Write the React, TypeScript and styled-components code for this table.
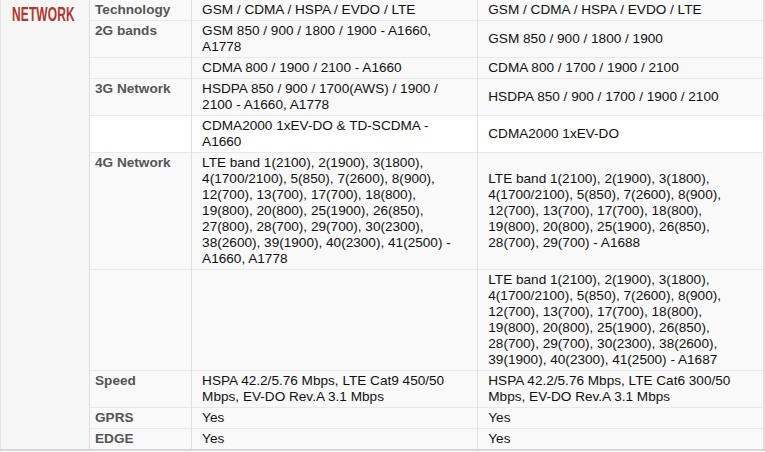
import styled, { createGlobalStyle } from 'styled-components';

const GlobalStyle = createGlobalStyle`
  body {
    margin: 0;
    background: #ffffff;
    font-family: "Liberation Sans", Arial, sans-serif;
  }
`;

const SpecTable = styled.table`
  width: 765px;
  table-layout: fixed;
  border-collapse: collapse;
  border-right: 2px solid #dcdcdc;
  border-bottom: 2px solid #d6d6d6;
  font-size: 13.6px;
  line-height: 16px;
`;

const Column = styled.col<{ $width: number }>`
  width: ${(p) => p.$width}px;
`;

const GroupCell = styled.th`
  background: #f6f6f6;
  border-left: 1px solid #e2e2e2;
  border-right: 1px solid #dedede;
  vertical-align: top;
  text-align: left;
  padding: 4px 0 0 11px;
`;

const GroupTitle = styled.span`
  display: inline-block;
  color: #b3352c;
  font-size: 20px;
  line-height: 20px;
  font-weight: 700;
  letter-spacing: 0.2px;
  transform: scaleX(0.6);
  transform-origin: left top;
`;

const Row = styled.tr<{ $plain?: boolean }>`
  background: ${(p) => (p.$plain ? '#ffffff' : '#f9f9f9')};
  border-top: 1px solid #e9e9e9;

  &:first-child {
    border-top: none;
  }
`;

const Label = styled.td`
  color: #555555;
  font-weight: 700;
  vertical-align: top;
  padding: 2px 4px 2px 5px;
  border-right: 1px solid #e0e0e0;
`;

const Value = styled.td`
  color: #111111;
  vertical-align: middle;
  padding: 2px 10px 2px 10px;
  border-right: 1px solid #e0e0e0;
`;

type Spec = {
  label: string;
  left: string;
  right: string;
  plain?: boolean;
};

const columns = [89, 102, 286, 286];

const specs: Spec[] = [
  {
    label: 'Technology',
    left: 'GSM / CDMA / HSPA / EVDO / LTE',
    right: 'GSM / CDMA / HSPA / EVDO / LTE',
  },
  {
    label: '2G bands',
    left: 'GSM 850 / 900 / 1800 / 1900 - A1660, A1778',
    right: 'GSM 850 / 900 / 1800 / 1900',
  },
  {
    label: '',
    left: 'CDMA 800 / 1900 / 2100 - A1660',
    right: 'CDMA 800 / 1700 / 1900 / 2100',
  },
  {
    label: '3G Network',
    left: 'HSDPA 850 / 900 / 1700(AWS) / 1900 / 2100 - A1660, A1778',
    right: 'HSDPA 850 / 900 / 1700 / 1900 / 2100',
  },
  {
    label: '',
    left: 'CDMA2000 1xEV-DO & TD-SCDMA - A1660',
    right: 'CDMA2000 1xEV-DO',
    plain: true,
  },
  {
    label: '4G Network',
    left:
      'LTE band 1(2100), 2(1900), 3(1800), 4(1700/2100), 5(850), 7(2600), 8(900), 12(700), 13(700), 17(700), 18(800), 19(800), 20(800), 25(1900), 26(850), 27(800), 28(700), 29(700), 30(2300), 38(2600), 39(1900), 40(2300), 41(2500) - A1660, A1778',
    right:
      'LTE band 1(2100), 2(1900), 3(1800), 4(1700/2100), 5(850), 7(2600), 8(900), 12(700), 13(700), 17(700), 18(800), 19(800), 20(800), 25(1900), 26(850), 28(700), 29(700) - A1688',
  },
  {
    label: '',
    left: '',
    right:
      'LTE band 1(2100), 2(1900), 3(1800), 4(1700/2100), 5(850), 7(2600), 8(900), 12(700), 13(700), 17(700), 18(800), 19(800), 20(800), 25(1900), 26(850), 28(700), 29(700), 30(2300), 38(2600), 39(1900), 40(2300), 41(2500) - A1687',
  },
  {
    label: 'Speed',
    left: 'HSPA 42.2/5.76 Mbps, LTE Cat9 450/50 Mbps, EV-DO Rev.A 3.1 Mbps',
    right: 'HSPA 42.2/5.76 Mbps, LTE Cat6 300/50 Mbps, EV-DO Rev.A 3.1 Mbps',
  },
  { label: 'GPRS', left: 'Yes', right: 'Yes' },
  { label: 'EDGE', left: 'Yes', right: 'Yes' },
];

function App() {
  return (
    <>
      <GlobalStyle />
      <SpecTable>
        <colgroup>
          {columns.map((w, i) => (
            <Column key={i} $width={w} />
          ))}
        </colgroup>
        <tbody>
          {specs.map((spec, i) => (
            <Row key={i} $plain={spec.plain}>
              {i === 0 ? (
                <GroupCell rowSpan={specs.length}>
                  <GroupTitle>NETWORK</GroupTitle>
                </GroupCell>
              ) : null}
              <Label>{spec.label}</Label>
              <Value>{spec.left}</Value>
              <Value>{spec.right}</Value>
            </Row>
          ))}
        </tbody>
      </SpecTable>
    </>
  );
}

export default App;
